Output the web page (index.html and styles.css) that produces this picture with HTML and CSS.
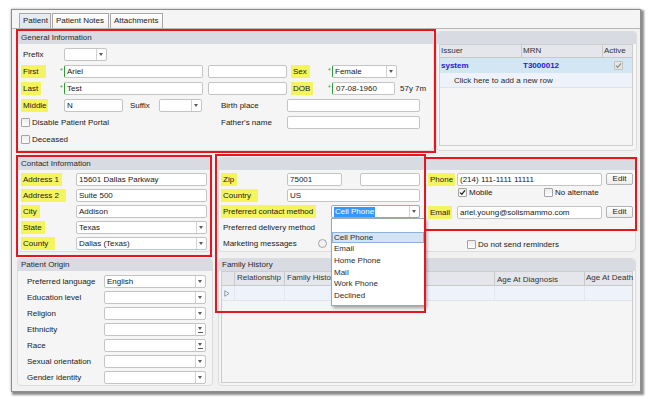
FILE: index.html
```html
<!DOCTYPE html>
<html lang="en">
<head>
<meta charset="utf-8">
<title>Patient</title>
<link rel="stylesheet" href="styles.css">
</head>
<body>
<div class="window">
  <div class="tabs">
    <div class="tab active tab-patient">Patient</div>
    <div class="tab tab-notes">Patient Notes</div>
    <div class="tab tab-attach">Attachments</div>
  </div>
  <div class="content">
    <div class="row r1">
      <section class="panel general">
        <div class="phead">General Information</div>
        <div class="gen-body">
          <div class="frow">
            <span class="lab w43"><span class="pl">Prefix</span></span>
            <div class="sel w43"><span class="val"></span><span class="arr"></span></div>
          </div>
          <div class="frow">
            <span class="lab w39"><span class="hl hl-wide">First</span></span>
            <span class="ast">*</span>
            <div class="inp req w139">Ariel</div>
            <div class="inp w79 ml5"></div>
            <span class="lab w37 ml4"><span class="hl">Sex</span></span>
            <span class="ast">*</span>
            <div class="sel req w65"><span class="val">Female</span><span class="arr"></span></div>
          </div>
          <div class="frow">
            <span class="lab w39"><span class="hl">Last</span></span>
            <span class="ast">*</span>
            <div class="inp req w139">Test</div>
            <div class="inp w79 ml5"></div>
            <span class="lab w37 ml4"><span class="hl">DOB</span></span>
            <span class="ast">*</span>
            <div class="inp req w63 date">07-08-1960</div>
            <span class="age">57y 7m</span>
          </div>
          <div class="frow">
            <span class="lab w43"><span class="hl hl-narrow">Middle</span></span>
            <div class="inp w59">N</div>
            <span class="lab w31 ml5"><span class="pl">Suffix</span></span>
            <div class="sel w43"><span class="val"></span><span class="arr"></span></div>
            <span class="lab w68 ml17"><span class="pl">Birth place</span></span>
            <div class="inp w133"></div>
          </div>
          <div class="frow">
            <span class="chk w198"><span class="cb"></span>Disable Patient Portal</span>
            <span class="lab w68"><span class="pl">Father's name</span></span>
            <div class="inp w133"></div>
          </div>
          <div class="frow">
            <span class="chk"><span class="cb"></span>Deceased</span>
          </div>
        </div>
      </section>
      <section class="panel issuer">
        <div class="phead"></div>
        <div class="itab">
          <div class="igrid ihead"><span>Issuer</span><span>MRN</span><span>Active</span></div>
          <div class="igrid irow irow-sel"><span class="blue">system</span><span class="blue">T3000012</span><span class="ctr"><span class="cb cb-dis"><svg width="7" height="7" viewBox="0 0 7 7"><path d="M1 3.6 L2.8 5.3 L6 1.4" fill="none" stroke="#8a8a8a" stroke-width="1.2"/></svg></span></span></div>
          <div class="irow irow-add">Click here to add a new row</div>
        </div>
      </section>
    </div>

    <div class="row r2">
      <section class="panel contact">
        <div class="phead">Contact Information</div>
        <div class="con-body">
          <div class="frow16"><span class="lab w55"><span class="hl">Address 1</span></span><div class="inp w131">15601 Dallas Parkway</div></div>
          <div class="frow16"><span class="lab w55"><span class="hl hl-wide">Address 2</span></span><div class="inp w131">Suite 500</div></div>
          <div class="frow16"><span class="lab w55"><span class="hl">City</span></span><div class="inp w131">Addison</div></div>
          <div class="frow16"><span class="lab w55"><span class="hl">State</span></span><div class="sel w131"><span class="val">Texas</span><span class="arr"></span></div></div>
          <div class="frow16"><span class="lab w55"><span class="hl hl-wide">County</span></span><div class="sel w131"><span class="val">Dallas (Texas)</span><span class="arr"></span></div></div>
        </div>
      </section>
      <section class="panel cont">
        <div class="phead"></div>
        <div class="cont-body">
          <div class="cont-left">
            <div class="frow16"><span class="lab w66"><span class="hl">Zip</span></span><div class="inp w55">75001</div><div class="inp w60 ml18"></div></div>
            <div class="frow16"><span class="lab w66"><span class="hl hl-wide">Country</span></span><div class="inp w133">US</div></div>
            <div class="frow16"><span class="lab w110"><span class="hl">Preferred contact method</span></span>
              <div class="sel sel-focus w89"><span class="val"><span class="picked">Cell Phone</span></span><span class="arr"></span>
                <div class="dd">
                  <div class="ddi cur">Cell Phone</div>
                  <div class="ddi">Email</div>
                  <div class="ddi">Home Phone</div>
                  <div class="ddi">Mail</div>
                  <div class="ddi">Work Phone</div>
                  <div class="ddi">Declined</div>
                </div>
              </div>
            </div>
            <div class="frow16"><span class="lab"><span class="pl">Preferred delivery method</span></span></div>
            <div class="frow16"><span class="lab w97"><span class="pl">Marketing messages</span></span><span class="rd"></span></div>
          </div>
          <div class="cont-right">
            <div class="frow16"><span class="lab w31"><span class="hl hl-phone">Phone</span></span><div class="inp w145">(214) 111-1111 11111</div><span class="btn">Edit</span></div>
            <div class="mrow">
              <span class="chk w86"><span class="cb"><svg width="7" height="7" viewBox="0 0 7 7"><path d="M1 3.6 L2.8 5.3 L6 1.4" fill="none" stroke="#222" stroke-width="1.3"/></svg></span>Mobile</span>
              <span class="chk"><span class="cb"></span>No alternate</span>
            </div>
            <div class="frow16 mt6"><span class="lab w31"><span class="hl hl-phone">Email</span></span><div class="inp w145">ariel.young@solismammo.com</div><span class="btn">Edit</span></div>
            <div class="frow16 mt16 ml41"><span class="chk"><span class="cb"></span>Do not send reminders</span></div>
          </div>
        </div>
      </section>
    </div>

    <div class="row r3">
      <section class="panel origin">
        <div class="phead">Patient Origin</div>
        <div class="org-body">
          <div class="frow16"><span class="lab w79"><span class="pl">Preferred language</span></span><div class="sel w102"><span class="val">English</span><span class="arr"></span></div></div>
          <div class="frow16"><span class="lab w79"><span class="pl">Education level</span></span><div class="sel w102"><span class="val"></span><span class="arr"></span></div></div>
          <div class="frow16"><span class="lab w79"><span class="pl">Religion</span></span><div class="sel w102"><span class="val"></span><span class="arr"></span></div></div>
          <div class="frow16"><span class="lab w79"><span class="pl">Ethnicity</span></span><div class="sel w102"><span class="val"></span><span class="arr arr-multi"></span></div></div>
          <div class="frow16"><span class="lab w79"><span class="pl">Race</span></span><div class="sel w102"><span class="val"></span><span class="arr arr-multi"></span></div></div>
          <div class="frow16"><span class="lab w79"><span class="pl">Sexual orientation</span></span><div class="sel w102"><span class="val"></span><span class="arr"></span></div></div>
          <div class="frow16"><span class="lab w79"><span class="pl">Gender identity</span></span><div class="sel w102"><span class="val"></span><span class="arr"></span></div></div>
        </div>
      </section>
      <section class="panel family">
        <div class="phead">Family History</div>
        <div class="ftab">
          <div class="fgrid fhead"><span></span><span>Relationship</span><span>Family History</span><span class="low">Age At Diagnosis</span><span>Age At Death</span></div>
          <div class="fgrid frow-d"><span class="ind"><svg width="6" height="7" viewBox="0 0 6 7"><path d="M0.8 0.8 L5 3.5 L0.8 6.2 Z" fill="#fff" stroke="#7b8aa3" stroke-width="0.9"/></svg></span><span></span><span></span><span></span><span></span></div>
        </div>
      </section>
    </div>
  </div>
</div>

<div class="anno a1"></div>
<div class="anno a2"></div>
<div class="anno a3"></div>
<div class="anno a4"></div>
</body>
</html>
```

FILE: styles.css
```css
* { box-sizing: border-box; }
html, body { margin: 0; padding: 0; }
body {
  position: relative;
  width: 650px;
  height: 399px;
  overflow: hidden;
  background: #fff;
  font-family: "Liberation Sans", Arial, sans-serif;
  font-size: 8px;
  color: #202020;
}

.window {
  margin: 9px 0 0 11px;
  width: 630px;
  height: 383px;
  border: 1px solid #8e8e8e;
  background: #f1f1f1;
  box-shadow: 2px 2px 2px 1px rgba(0,0,0,.45), -1px -1px 2px rgba(0,0,0,.12);
}

/* tabs */
.tabs {
  display: flex;
  gap: 1px;
  height: 19px;
  padding: 3px 0 0 7px;
  border-bottom: 1px solid #b8b8b8;
  background: #f5f5f5;
}
.tab {
  height: 15px;
  line-height: 14px;
  padding-left: 3px;
  border: 1px solid #a8a8a8;
  border-bottom: 0;
  background: linear-gradient(#ffffff, #f1f1f1);
  color: #222;
}
.tab.active { background: linear-gradient(#e9edf5, #dfe5ef); }
.tab-patient { width: 32px; }
.tab-notes { width: 57px; }
.tab-attach { width: 53px; }

.content { padding: 2px 3px 0 5px; }
.row { display: flex; }
.r1 { height: 120px; gap: 2px; }
.r2 { height: 95px; gap: 7px; margin-top: 6px; }
.r3 { height: 128px; gap: 5px; margin-top: 6px; }

.panel {
  position: relative;
  flex: none;
  background: #f5f5f5;
  border: 1px solid #dcdcdc;
  border-radius: 4px;
}
.phead {
  height: 12px;
  line-height: 12px;
  padding-left: 3px;
  background: #d8dbe2;
  border-radius: 3px 3px 0 0;
  color: #2a2a2a;
}
.general { width: 417px; }
.issuer { width: 201px; }
.contact { width: 194px; }
.cont { width: 418px; }
.origin { width: 196px; }
.family { width: 418px; }

/* form rows */
.frow { display: flex; align-items: center; height: 17px; }
.frow16 { display: flex; align-items: center; height: 16px; }
.lab { flex: none; display: flex; align-items: center; white-space: nowrap; }
.pl { padding-left: 2px; }
.hl {
  display: inline-block;
  line-height: 13px;
  padding: 0 3px 0 2px;
  background: #f4f45e;
}
.hl-wide { padding-right: 7px; }
.hl-narrow { padding-right: 1px; }
.hl-phone { margin-left: 2px; padding-right: 2px; }

.ast {
  flex: none;
  width: 4px;
  align-self: flex-start;
  margin-top: 4px;
  line-height: 7px;
  font-size: 7px;
  color: #3a9f42;
}

.inp, .sel {
  flex: none;
  position: relative;
  height: 13px;
  line-height: 11px;
  background: #fff;
  border: 1px solid #c4c4c4;
  border-radius: 2px;
  white-space: nowrap;
}
.inp { padding-left: 2px; overflow: hidden; }
.req { border-left: 1px solid #2f9a37; }
.date { padding-left: 3px; }
.sel { display: flex; }
.sel .val { flex: 1; overflow: hidden; padding-left: 2px; }
.arr {
  position: relative;
  flex: none;
  width: 10px;
  border-left: 1px solid #d2d2d2;
}
.arr::after {
  content: "";
  position: absolute;
  left: 2px;
  top: 4px;
  border-left: 2.5px solid transparent;
  border-right: 2.5px solid transparent;
  border-top: 3px solid #5a5a5a;
}
.arr-multi::before {
  content: "";
  position: absolute;
  left: 2px;
  top: 8px;
  width: 5px;
  height: 1px;
  background: #5a5a5a;
}
.arr-multi::after { top: 3px; }

.sel-focus { border-color: #86aedb; }
.picked { background: #3399ff; color: #fff; padding: 0 1px; line-height: 10px; display: inline-block; }

.age { margin-left: 5px; white-space: nowrap; }

.chk { flex: none; display: flex; align-items: center; white-space: nowrap; }
.cb {
  flex: none;
  width: 9px;
  height: 9px;
  margin-right: 2px;
  border: 1px solid #a4a4a4;
  border-radius: 1px;
  background: linear-gradient(#ececec, #fdfdfd);
  display: flex;
  align-items: center;
  justify-content: center;
}
.cb-dis { background: #e6e6e6; border-color: #c2c2c2; margin: 0; }
.rd {
  flex: none;
  width: 9px;
  height: 9px;
  border-radius: 50%;
  border: 1px solid #a4a4a4;
  background: #f2f2f2;
}

.btn {
  flex: none;
  width: 27px;
  height: 12px;
  margin-left: 4px;
  line-height: 10px;
  text-align: center;
  border: 1px solid #b2b2b2;
  border-radius: 2px;
  background: linear-gradient(#ffffff, #ebebeb);
}

/* widths / spacing */
.w31 { width: 31px; } .w37 { width: 37px; } .w39 { width: 39px; } .w43 { width: 43px; }
.w55 { width: 55px; } .w59 { width: 59px; } .w60 { width: 60px; } .w63 { width: 63px; }
.w65 { width: 65px; } .w66 { width: 66px; } .w68 { width: 68px; } .w79 { width: 79px; }
.w86 { width: 86px; } .w89 { width: 89px; } .w97 { width: 97px; } .w102 { width: 102px; }
.w110 { width: 110px; } .w131 { width: 131px; } .w133 { width: 133px; } .w139 { width: 139px; }
.w145 { width: 145px; } .w198 { width: 198px; }
.ml4 { margin-left: 4px; } .ml5 { margin-left: 5px; } .ml17 { margin-left: 17px; }
.ml18 { margin-left: 18px; } .ml41 { margin-left: 41px; }
.mt6 { margin-top: 6px; } .mt16 { margin-top: 16px; }

/* general */
.gen-body { padding: 2px 0 0 3px; }

/* issuer table */
.itab {
  margin: 0 0 0 2px;
  width: 194px;
  height: 102px;
  border: 1px solid #cdcdcd;
  background: #f5f5f5;
}
.igrid { display: grid; grid-template-columns: 81px 81px 1fr; }
.igrid > span { padding-left: 1px; white-space: nowrap; }
.igrid > span + span { border-left: 1px solid #c9c9c9; }
.ihead { height: 13px; line-height: 12px; background: #e4e6eb; border-bottom: 1px solid #c9c9c9; color: #333; }
.irow { height: 15px; line-height: 15px; }
.irow-sel { background: #d3e6f4; }
.irow-sel > span + span { border-left-color: transparent; }
.blue { color: #1c1cd8; font-weight: bold; }
.ctr { display: flex; align-items: center; justify-content: center; }
.irow-add { background: #eef2fb; padding-left: 14px; border-bottom: 1px solid #dfe3ea; color: #2a2a2a; }

/* contact */
.con-body { padding: 1px 0 0 3px; }
.cont-body { display: flex; }
.cont-left { width: 206px; padding: 1px 0 0 2px; }
.cont-right { flex: 1; padding: 1px 0 0 1px; }
.mrow { display: flex; align-items: center; height: 11px; margin-left: 32px; }

/* dropdown */
.dd {
  position: absolute;
  left: -1px;
  top: 12px;
  width: 94px;
  height: 88px;
  padding-top: 13px;
  background: #fff;
  border: 1px solid #a6a6a6;
  box-shadow: 2px 2px 3px rgba(0,0,0,.35);
  z-index: 5;
}
.ddi { height: 11.7px; line-height: 11.7px; padding-left: 2px; color: #2c2c2c; }
.ddi.cur { background: #d3e4f5; outline: 1px solid #8db1da; outline-offset: -1px; }

/* origin */
.org-body { padding: 2px 0 0 7px; }

/* family */
.ftab {
  margin-left: 2px;
  width: 412px;
  height: 112px;
  border: 1px solid #cdcdcd;
  background: #f5f5f5;
}
.fgrid { display: grid; grid-template-columns: 12px 50px 210px 90px 1fr; }
.fgrid > span { padding-left: 2px; white-space: nowrap; }
.fgrid > span + span { border-left: 1px solid #c9c9c9; }
.fhead { height: 14px; line-height: 12px; background: #e4e6eb; border-bottom: 1px solid #c9c9c9; color: #333; }
.fhead > span:last-child { padding-left: 1px; }
.fhead .low { line-height: 15px; }
.frow-d { height: 15px; background: #eef2fb; border-bottom: 1px solid #dfe3ea; }
.frow-d > span + span { border-left-color: #e2e6ee; }
.ind { display: flex; align-items: center; }

/* annotation boxes */
.anno {
  position: absolute;
  border: 2px solid #e5161d;
  pointer-events: none;
  z-index: 10;
}
.a1 { left: 16px; top: 29px; width: 420px; height: 124px; }
.a2 { left: 16px; top: 155px; width: 196px; height: 102px; }
.a3 { left: 215px; top: 154px; width: 211px; height: 159px; }
.a4 { left: 424px; top: 157px; width: 213px; height: 74px; }
```
